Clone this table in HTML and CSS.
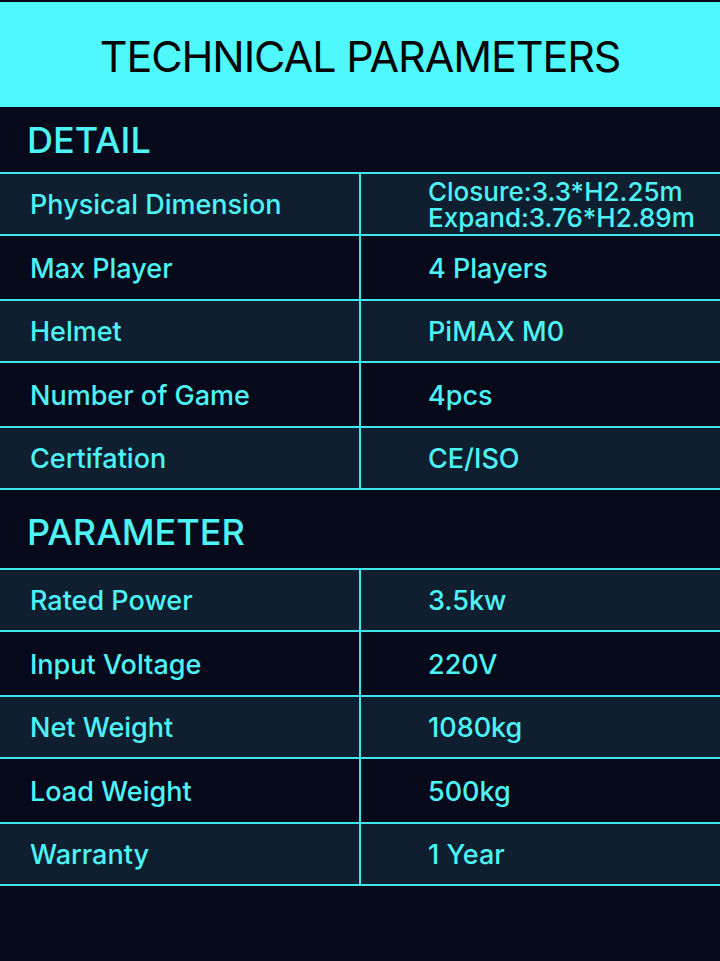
FILE: index.html
```html
<!DOCTYPE html>
<html>
<head>
<meta charset="utf-8">
<link rel="stylesheet" href="styles.css">
</head>
<body>
<div class="page">
  <header class="banner"><h1>TECHNICAL PARAMETERS</h1></header>

  <h2 class="section detail">DETAIL</h2>
  <div class="table">
    <div class="row light"><div class="key">Physical Dimension</div><div class="val multi"><span>Closure:3.3*H2.25m</span><span>Expand:3.76*H2.89m</span></div></div>
    <div class="row dark"><div class="key">Max Player</div><div class="val">4 Players</div></div>
    <div class="row light"><div class="key">Helmet</div><div class="val">PiMAX M0</div></div>
    <div class="row dark"><div class="key">Number of Game</div><div class="val">4pcs</div></div>
    <div class="row light"><div class="key">Certifation</div><div class="val">CE/ISO</div></div>
  </div>

  <h2 class="section param">PARAMETER</h2>
  <div class="table">
    <div class="row light"><div class="key">Rated Power</div><div class="val">3.5kw</div></div>
    <div class="row dark"><div class="key">Input Voltage</div><div class="val">220V</div></div>
    <div class="row light"><div class="key">Net Weight</div><div class="val">1080kg</div></div>
    <div class="row dark"><div class="key">Load Weight</div><div class="val">500kg</div></div>
    <div class="row light"><div class="key">Warranty</div><div class="val">1 Year</div></div>
  </div>
</div>
</body>
</html>
```

FILE: styles.css
```css
* { box-sizing: border-box; }
html, body { margin: 0; padding: 0; }
body {
  background: #070a1b;
  font-family: "Inter", "Open Sans", sans-serif;
  color: #4ef3f7;
}
.page {
  width: 720px;
  height: 961px;
  padding-top: 2px;
}
.banner {
  height: 105px;
  background: #4ff8fc;
  display: flex;
  align-items: center;
  justify-content: center;
}
.banner h1 {
  margin: 0;
  font-weight: 400;
  font-size: 43px;
  color: #050505;
  letter-spacing: -1.1px;
  padding-top: 2px;
}
.section {
  margin: 0;
  font-weight: 500;
  font-size: 36px;
  padding-left: 27px;
  display: flex;
  align-items: center;
  color: #4ef3f7;
}
.section.detail { height: 65px; }
.section.param { height: 78px; padding-top: 6px; }
.table {
  border-bottom: 2px solid #3fe6ec;
}
.row {
  display: flex;
  border-top: 2px solid #3fe6ec;
}
.row.light { background: #0f1f30; height: 62px; }
.row.dark { background: #070a1b; height: 65px; }
.key {
  width: 361px;
  border-right: 2px solid #3fe6ec;
  padding-left: 30px;
  padding-top: 1px;
  display: flex;
  align-items: center;
  font-size: 27px;
  font-weight: 500;
}
.val {
  flex: 1;
  padding-left: 67px;
  padding-top: 1px;
  display: flex;
  align-items: center;
  font-size: 27px;
  font-weight: 500;
}
.val.multi {
  flex-direction: column;
  align-items: flex-start;
  justify-content: center;
  font-size: 26px;
  line-height: 26px;
  padding-top: 1px;
}
```
